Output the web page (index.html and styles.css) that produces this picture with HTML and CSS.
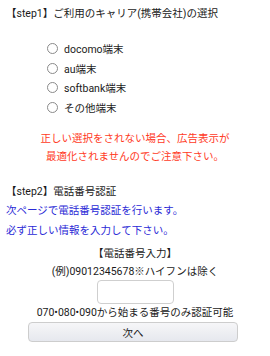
FILE: index.html
```html
<!DOCTYPE html>
<html>
<head>
    <meta charset="UTF-8">
    <title>キャリア選択</title>
    <link rel="stylesheet" href="styles.css">
</head>
<body>

<div class="step-title">【step1】ご利用のキャリア(携帯会社)の選択</div>

<form>
    <ul class="carrier-list">
        <li><label><span class="radio"></span>docomo端末</label></li>
        <li><label><span class="radio"></span>au端末</label></li>
        <li><label><span class="radio"></span>softbank端末</label></li>
        <li><label><span class="radio"></span>その他端末</label></li>
    </ul>

    <p class="warning">正しい選択をされない場合、広告表示が<br>最適化されませんのでご注意下さい。</p>

    <div class="step-title step2">【step2】電話番号認証</div>
    <p class="notice">次ページで電話番号認証を行います。<br>必ず正しい情報を入力して下さい。</p>

    <div class="tel-box">
        <div>【電話番号入力】</div>
        <div>(例)09012345678※ハイフンは除く</div>
        <input type="tel" class="tel-input">
        <div>070•080•090から始まる番号のみ認証可能</div>
    </div>

    <button type="button" class="next-btn">次へ</button>
</form>

</body>
</html>
```

FILE: styles.css
```css
body {
    margin: 0;
    padding: 5px 6px;
    font-family: Roboto, "Noto Sans CJK JP", sans-serif;
    font-size: 10.5px;
    color: #1a1a1a;
    background: #fff;
}

.step-title {
    line-height: 18px;
}

.carrier-list {
    list-style: none;
    margin: 16px 0 0;
    padding: 0 0 0 41px;
}
.carrier-list li {
    height: 19.5px;
    display: flex;
    align-items: center;
}
.carrier-list label {
    display: flex;
    align-items: center;
}
.radio {
    width: 9px;
    height: 9px;
    border: 1px solid #8a8a8a;
    border-radius: 50%;
    margin-right: 6px;
}

.warning {
    margin: 13px 0 0;
    text-align: center;
    color: #ff3a1e;
    line-height: 18px;
}

.step2 {
    margin-top: 16px;
    line-height: 19px;
}

.notice {
    margin: 0;
    color: #2a2ad6;
    line-height: 19.5px;
}

.tel-box {
    margin-top: 5px;
    text-align: center;
    line-height: 18px;
}
.tel-input {
    display: block;
    box-sizing: border-box;
    width: 77px;
    height: 24px;
    margin: -1px auto 0;
    border: 1px solid #cfcfcf;
    border-radius: 4px;
    background: #fff;
}

.next-btn {
    display: block;
    box-sizing: border-box;
    width: 210px;
    height: 20px;
    margin: 0 0 0 22px;
    padding: 0;
    font-family: inherit;
    font-size: 10.5px;
    color: #1a1a1a;
    border: 1px solid #cdcdcd;
    border-radius: 4px;
    background: linear-gradient(#f6f6f8, #e6e8ee);
}
```
